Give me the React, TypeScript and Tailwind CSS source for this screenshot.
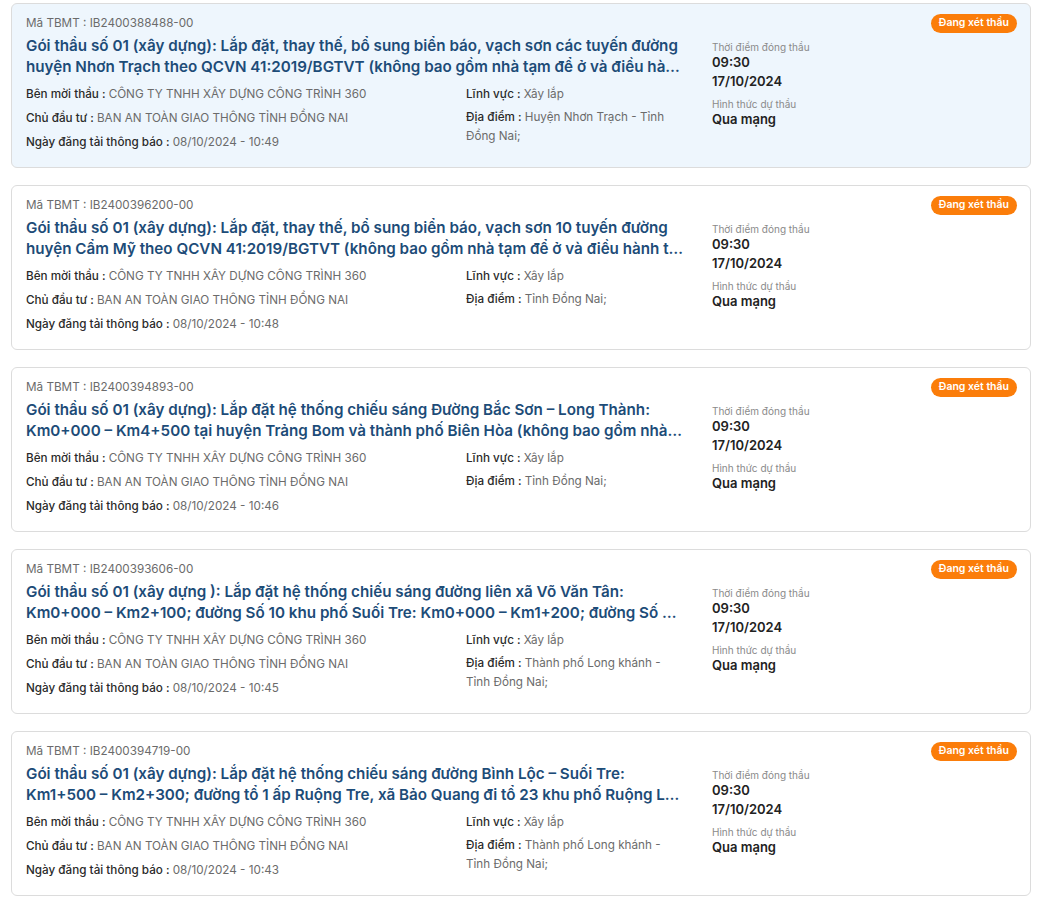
import React from "react";

type Item = {
  code: string;
  title: string;
  date: string;
  place: string;
  active?: boolean;
};

const items: Item[] = [
  {
    code: "IB2400388488-00",
    title:
      "Gói thầu số 01 (xây dựng): Lắp đặt, thay thế, bổ sung biển báo, vạch sơn các tuyến đường huyện Nhơn Trạch theo QCVN 41:2019/BGTVT (không bao gồm nhà tạm để ở và điều hành thi công)",
    date: "08/10/2024 - 10:49",
    place: "Huyện Nhơn Trạch - Tỉnh Đồng Nai;",
    active: true,
  },
  {
    code: "IB2400396200-00",
    title:
      "Gói thầu số 01 (xây dựng): Lắp đặt, thay thế, bổ sung biển báo, vạch sơn 10 tuyến đường huyện Cẩm Mỹ theo QCVN 41:2019/BGTVT (không bao gồm nhà tạm để ở và điều hành thi công)",
    date: "08/10/2024 - 10:48",
    place: "Tỉnh Đồng Nai;",
  },
  {
    code: "IB2400394893-00",
    title:
      "Gói thầu số 01 (xây dựng): Lắp đặt hệ thống chiếu sáng Đường Bắc Sơn – Long Thành: Km0+000 – Km4+500 tại huyện Trảng Bom và thành phố Biên Hòa (không bao gồm nhà tạm để ở và điều hành thi công)",
    date: "08/10/2024 - 10:46",
    place: "Tỉnh Đồng Nai;",
  },
  {
    code: "IB2400393606-00",
    title:
      "Gói thầu số 01 (xây dựng ): Lắp đặt hệ thống chiếu sáng đường liên xã Võ Văn Tân: Km0+000 – Km2+100; đường Số 10 khu phố Suối Tre: Km0+000 – Km1+200; đường Số 2 khu phố Suối Tre (không bao gồm nhà tạm để ở và điều hành thi công)",
    date: "08/10/2024 - 10:45",
    place: "Thành phố Long khánh - Tỉnh Đồng Nai;",
  },
  {
    code: "IB2400394719-00",
    title:
      "Gói thầu số 01 (xây dựng): Lắp đặt hệ thống chiếu sáng đường Bình Lộc – Suối Tre: Km1+500 – Km2+300; đường tổ 1 ấp Ruộng Tre, xã Bảo Quang đi tổ 23 khu phố Ruộng Lớn (không bao gồm nhà tạm để ở và điều hành thi công)",
    date: "08/10/2024 - 10:43",
    place: "Thành phố Long khánh - Tỉnh Đồng Nai;",
  },
];

function Field({ label, value }: { label: string; value: string }) {
  return (
    <div className="leading-[20px]">
      <span className="font-medium text-[#2a2a2a]">{label} : </span>
      <span className="text-[#6b6b6b]">{value}</span>
    </div>
  );
}

function Card({ item }: { item: Item }) {
  return (
    <div
      className={`flex rounded-[6px] border border-[#dcdcdc] pl-[14px] pr-[13px] pt-[9px] pb-[15px] ${
        item.active ? "bg-[#eef6fd]" : "bg-white"
      }`}
    >
      <div className="w-[660px] shrink-0">
        <div className="text-[11.7px] leading-[20px] text-[#6b6b6b]">Mã TBMT : {item.code}</div>
        <div className="mt-[2px] line-clamp-2 w-[658px] text-[15.2px] font-semibold leading-[21px] text-[#1d4c78]">
          {item.title}
        </div>
        <div className="mt-[7px] grid grid-cols-[440px_220px] text-[11.7px]">
          <div className="flex flex-col gap-[4px]">
            <Field label="Bên mời thầu" value="CÔNG TY TNHH XÂY DỰNG CÔNG TRÌNH 360" />
            <Field label="Chủ đầu tư" value="BAN AN TOÀN GIAO THÔNG TỈNH ĐỒNG NAI" />
            <Field label="Ngày đăng tải thông báo" value={item.date} />
          </div>
          <div className="flex flex-col gap-[4px]">
            <Field label="Lĩnh vực" value="Xây lắp" />
            <div className="leading-[19px]">
              <span className="font-medium text-[#2a2a2a]">Địa điểm : </span>
              <span className="text-[#6b6b6b]">{item.place}</span>
            </div>
          </div>
        </div>
      </div>
      <div className="ml-[26px] flex flex-1 flex-col justify-center pt-[4px]">
        <div className="text-[10px] leading-[12px] text-[#8a8a8a]">Thời điểm đóng thầu</div>
        <div className="text-[13px] font-semibold leading-[19px] text-[#222]">09:30</div>
        <div className="text-[13px] font-semibold leading-[19px] text-[#222]">17/10/2024</div>
        <div className="mt-[7px] text-[10px] leading-[12px] text-[#8a8a8a]">Hình thức dự thầu</div>
        <div className="text-[13px] font-semibold leading-[19px] text-[#222]">Qua mạng</div>
      </div>
      <div className="mt-[1px] flex h-[19px] items-center self-start rounded-full bg-[#fb7d0a] px-[8px] text-[10.5px] font-semibold leading-none text-white">
        Đang xét thầu
      </div>
    </div>
  );
}

export default function App() {
  return (
    <div
      className="min-h-[908px] w-[1054px] bg-white px-[11px] pt-[3px]"
      style={{ fontFamily: "Inter, 'Noto Sans', sans-serif" }}
    >
      <div className="flex w-[1020px] flex-col gap-[17px]">
        {items.map((it) => (
          <Card key={it.code} item={it} />
        ))}
      </div>
    </div>
  );
}
